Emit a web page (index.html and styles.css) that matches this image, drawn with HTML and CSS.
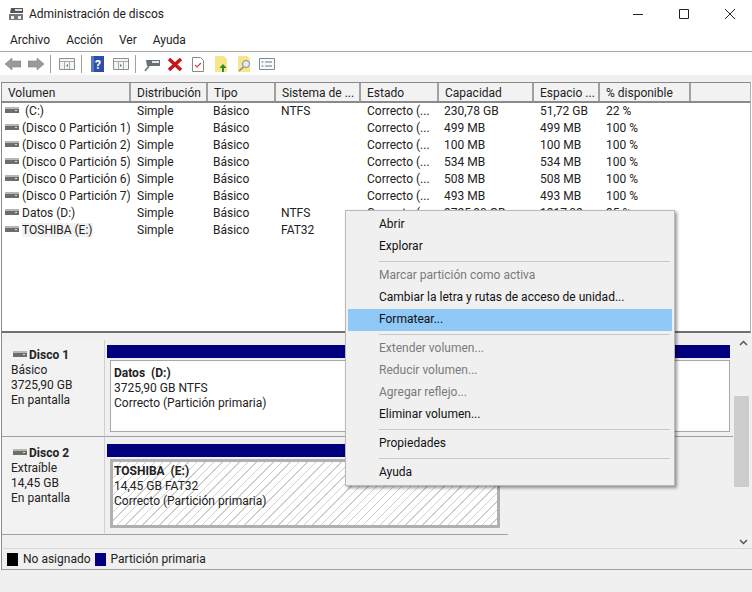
FILE: index.html
```html
<!DOCTYPE html>
<html lang="es">
<head>
    <meta charset="UTF-8">
    <title>Administración de discos</title>
    <link rel="stylesheet" href="styles.css">
</head>
<body>
<svg class="defs" width="0" height="0">
    <symbol id="disk" viewBox="0 0 14 6">
        <rect x="0" y="0" width="14" height="6" fill="#6b6f6b"/>
        <rect x="0" y="0" width="14" height="2" fill="#b4b8b4"/>
        <rect x="10" y="3" width="2" height="1" fill="#d8e8d0"/>
    </symbol>
</svg>
<div class="window">
    <div class="titlebar">
        <svg class="app-icon" width="16" height="16" viewBox="0 0 16 16">
            <path d="M3 2h12v5H2z" fill="#555"/>
            <rect x="7" y="3" width="7" height="2" fill="#ddd"/>
            <rect x="1" y="8" width="14" height="6" fill="#777"/>
            <rect x="3" y="10" width="3" height="3" fill="#eee"/>
            <rect x="10" y="10" width="3" height="3" fill="#eee"/>
        </svg>
        <span class="title">Administración de discos</span>
        <div class="controls">
            <svg width="12" height="12" viewBox="0 0 12 12"><path d="M1 6.500h10" stroke="#222" fill="none"/></svg>
            <svg width="12" height="12" viewBox="0 0 12 12"><path d="M1.500 1.500h9v9h-9z" stroke="#222" fill="none"/></svg>
            <svg width="12" height="12" viewBox="0 0 12 12"><path d="M1 1l10 10M11 1L1 11" stroke="#222" fill="none"/></svg>
        </div>
    </div>
    <div class="menubar">
        <span>Archivo</span>
        <span>Acción</span>
        <span>Ver</span>
        <span>Ayuda</span>
    </div>
    <div class="toolbar">
        <svg width="16" height="16" viewBox="0 0 16 16"><path d="M0 8l7-6v3h9v6H7v3z" fill="#9a9a9a" stroke="#777" stroke-width=".5"/></svg>
        <svg width="16" height="16" viewBox="0 0 16 16"><path d="M16 8L9 2v3H0v6h9v3z" fill="#9a9a9a" stroke="#777" stroke-width=".5"/></svg>
        <i class="sep"></i>
        <svg width="16" height="16" viewBox="0 0 16 16"><path d="M.5 2.500h15v11H.5z" fill="#f4f4f4" stroke="#8a8f94"/><path d="M1 5.500h14M5.500 6v7M10.500 6v7" stroke="#a5aaaf" fill="none"/><path d="M9 8v3L7 9.500z" fill="#4a8a5a"/></svg>
        <i class="sep"></i>
        <svg width="16" height="16" viewBox="0 0 16 16"><rect x="1" y="0" width="13" height="16" fill="#2c4fa8"/><rect x="1" y="0" width="3" height="16" fill="#5577c8"/><text x="8" y="12.500" class="help-mark">?</text></svg>
        <svg width="16" height="16" viewBox="0 0 16 16"><path d="M.5 2.500h15v11H.5z" fill="#f4f4f4" stroke="#8a8f94"/><path d="M1 5.500h14M5.500 6v7M10.500 6v7" stroke="#a5aaaf" fill="none"/><path d="M7 8v3l2-1.500z" fill="#4a8a5a"/></svg>
        <i class="sep"></i>
        <svg width="16" height="16" viewBox="0 0 16 16"><path d="M2 4h14v6H3z" fill="#6a7078"/><rect x="8" y="5" width="7" height="2" fill="#dfe6ee"/><path d="M5 10l-4 5" stroke="#7a8a7a" stroke-width="2"/></svg>
        <svg width="16" height="16" viewBox="0 0 16 16"><path d="M2 3l12 11M14 3L2 14" stroke="#c8141e" stroke-width="3.500" fill="none"/></svg>
        <svg width="16" height="16" viewBox="0 0 16 16"><path d="M2.500 1.500h8l3 3v11h-11z" fill="#fff" stroke="#8a8a8a"/><path d="M5 9l2 2 4-4" stroke="#d2483c" stroke-width="1.200" fill="none"/></svg>
        <svg width="16" height="16" viewBox="0 0 16 16"><path d="M2 0h9l3 3v13H2z" fill="#f7e58a"/><path d="M10 8l-3.500 4H9v4h2v-4h2.500z" fill="#2c8a2c"/></svg>
        <svg width="16" height="16" viewBox="0 0 16 16"><path d="M2 0h9l3 3v13H2z" fill="#f7e58a"/><circle cx="10" cy="8" r="3.500" fill="#e4eef6" stroke="#7a8a99"/><path d="M7.500 11L3 15" stroke="#7a8a99" stroke-width="1.500"/></svg>
        <svg width="16" height="16" viewBox="0 0 16 16"><path d="M.5 2.500h15v11H.5z" fill="#f8f8f8" stroke="#7f8a92"/><path d="M6 6h7M6 10h7M2.500 6h2M2.500 10h2" stroke="#6a7a88" fill="none"/></svg>
    </div>
    <div class="toolbar-gap"></div>

    <div class="volumes">
        <table>
            <colgroup>
                <col class="c-vol"><col class="c-dist"><col class="c-tipo"><col class="c-fs">
                <col class="c-estado"><col class="c-cap"><col class="c-libre"><col class="c-pct"><col>
            </colgroup>
            <thead>
                <tr>
                    <th>Volumen</th><th>Distribución</th><th>Tipo</th><th>Sistema de ...</th>
                    <th>Estado</th><th>Capacidad</th><th>Espacio ...</th><th>% disponible</th><th></th>
                </tr>
            </thead>
            <tbody>
                <tr><td><svg class="disk"><use href="#disk"/></svg>&nbsp;(C:)</td><td>Simple</td><td>Básico</td><td>NTFS</td><td>Correcto (...</td><td>230,78 GB</td><td>51,72 GB</td><td>22 %</td><td></td></tr>
                <tr><td><svg class="disk"><use href="#disk"/></svg>(Disco 0 Partición 1)</td><td>Simple</td><td>Básico</td><td></td><td>Correcto (...</td><td>499 MB</td><td>499 MB</td><td>100 %</td><td></td></tr>
                <tr><td><svg class="disk"><use href="#disk"/></svg>(Disco 0 Partición 2)</td><td>Simple</td><td>Básico</td><td></td><td>Correcto (...</td><td>100 MB</td><td>100 MB</td><td>100 %</td><td></td></tr>
                <tr><td><svg class="disk"><use href="#disk"/></svg>(Disco 0 Partición 5)</td><td>Simple</td><td>Básico</td><td></td><td>Correcto (...</td><td>534 MB</td><td>534 MB</td><td>100 %</td><td></td></tr>
                <tr><td><svg class="disk"><use href="#disk"/></svg>(Disco 0 Partición 6)</td><td>Simple</td><td>Básico</td><td></td><td>Correcto (...</td><td>508 MB</td><td>508 MB</td><td>100 %</td><td></td></tr>
                <tr><td><svg class="disk"><use href="#disk"/></svg>(Disco 0 Partición 7)</td><td>Simple</td><td>Básico</td><td></td><td>Correcto (...</td><td>493 MB</td><td>493 MB</td><td>100 %</td><td></td></tr>
                <tr><td><svg class="disk"><use href="#disk"/></svg>Datos (D:)</td><td>Simple</td><td>Básico</td><td>NTFS</td><td>Correcto (...</td><td>3725,90 GB</td><td>1317,02 ...</td><td>35 %</td><td></td></tr>
                <tr><td><svg class="disk"><use href="#disk"/></svg><span class="current">TOSHIBA (E:)</span></td><td>Simple</td><td>Básico</td><td>FAT32</td><td>Correcto (...</td><td>14,45 GB</td><td>14,45 GB</td><td>100 %</td><td></td></tr>
            </tbody>
        </table>
    </div>

    <div class="disks">
        <div class="disk-list">
            <div class="disk-row">
                <div class="disk-info">
                    <div class="disk-name"><svg class="disk"><use href="#disk"/></svg><b>Disco 1</b></div>
                    <div>Básico</div>
                    <div>3725,90 GB</div>
                    <div>En pantalla</div>
                </div>
                <div class="partition-wrap">
                    <div class="partition-bar"></div>
                    <div class="partition">
                        <b>Datos&nbsp; (D:)</b>
                        <div>3725,90 GB NTFS</div>
                        <div>Correcto (Partición primaria)</div>
                    </div>
                </div>
            </div>
            <div class="disk-row short">
                <div class="disk-info">
                    <div class="disk-name"><svg class="disk"><use href="#disk"/></svg><b>Disco 2</b></div>
                    <div>Extraíble</div>
                    <div>14,45 GB</div>
                    <div>En pantalla</div>
                </div>
                <div class="partition-wrap">
                    <div class="partition-bar"></div>
                    <div class="partition hatched">
                        <b>TOSHIBA&nbsp; (E:)</b>
                        <div>14,45 GB FAT32</div>
                        <div>Correcto (Partición primaria)</div>
                    </div>
                </div>
            </div>
        </div>
        <div class="scrollbar">
            <svg width="9" height="6" viewBox="0 0 9 6"><path d="M1 5l3.500-3.500L8 5" stroke="#555" stroke-width="1.500" fill="none"/></svg>
            <div class="track"><div class="thumb"></div></div>
            <svg width="9" height="6" viewBox="0 0 9 6"><path d="M1 1l3.500 3.500L8 1" stroke="#555" stroke-width="1.500" fill="none"/></svg>
        </div>
    </div>

    <div class="legend">
        <i class="swatch black"></i><span>No asignado</span>
        <i class="swatch navy"></i><span>Partición primaria</span>
    </div>
    <div class="statusbar"></div>

    <div class="context-menu">
        <div class="item">Abrir</div>
        <div class="item">Explorar</div>
        <hr>
        <div class="item off">Marcar partición como activa</div>
        <div class="item">Cambiar la letra y rutas de acceso de unidad...</div>
        <div class="item active">Formatear...</div>
        <hr>
        <div class="item off">Extender volumen...</div>
        <div class="item off">Reducir volumen...</div>
        <div class="item off">Agregar reflejo...</div>
        <div class="item">Eliminar volumen...</div>
        <hr>
        <div class="item">Propiedades</div>
        <hr>
        <div class="item">Ayuda</div>
    </div>
</div>
</body>
</html>
```

FILE: styles.css
```css
* {
    box-sizing: border-box;
}
body {
    margin: 0;
    font-family: Roboto, "Noto Sans", sans-serif;
    font-size: 12px;
    color: #222;
    background: #fff;
}
.defs {
    position: absolute;
}
.window {
    position: relative;
    width: 752px;
    height: 592px;
    overflow: hidden;
    display: flex;
    flex-direction: column;
}
.titlebar {
    height: 28px;
    flex: none;
    display: flex;
    align-items: center;
    padding-left: 8px;
    gap: 5px;
}
.controls {
    margin-left: auto;
    display: flex;
    gap: 34px;
    padding-right: 16px;
}
.menubar {
    height: 24px;
    flex: none;
    display: flex;
    align-items: center;
    gap: 16px;
    padding-left: 10px;
    border-bottom: 1px solid #a8a8a8;
}
.toolbar {
    height: 23px;
    flex: none;
    display: flex;
    align-items: center;
    gap: 7px;
    padding-left: 5px;
}
.sep {
    width: 1px;
    height: 18px;
    background: #a0a0a0;
    margin: 0 1px 0 -1px;
}
.help-mark {
    font-size: 12px;
    font-weight: bold;
    fill: #fff;
    text-anchor: middle;
}
.toolbar-gap {
    height: 7px;
    flex: none;
    background: #f0f0f0;
}
.volumes {
    height: 251px;
    flex: none;
    margin: 0 1px;
    border-left: 1px solid #8a8a8a;
    border-right: 1px solid #b0b0b0;
    border-top: 1px solid #8a8a8a;
    border-bottom: 2px solid #707070;
}
table {
    border-collapse: collapse;
    table-layout: fixed;
    width: 100%;
}
.c-vol { width: 128px; }
.c-dist { width: 77px; }
.c-tipo { width: 68px; }
.c-fs { width: 85px; }
.c-estado { width: 78px; }
.c-cap { width: 95px; }
.c-libre { width: 66px; }
.c-pct { width: 91px; }
th {
    height: 19px;
    padding: 1px 0 0 6px;
    text-align: left;
    font-weight: normal;
    background: #f2f2f2;
    border-right: 2px solid #a0a0a0;
    border-bottom: 2px solid #8a8a8a;
    white-space: nowrap;
    overflow: hidden;
}
th:last-child {
    border-right: none;
}
td {
    height: 17px;
    padding: 0 0 0 6px;
    white-space: nowrap;
    overflow: hidden;
}
td:first-child {
    padding-left: 3px;
}
td:nth-child(2), td:nth-child(5), td:nth-child(7), td:nth-child(8) {
    padding-left: 7px;
}
.disk {
    width: 14px;
    height: 6px;
    margin-right: 3px;
    vertical-align: 2px;
}
.current {
    background: #f2f2f2;
}
.disks {
    height: 215px;
    flex: none;
    display: flex;
    margin-left: 1px;
    border-left: 1px solid #8a8a8a;
    background: #f0f0f0;
}
.disk-list {
    flex: 1;
    padding-top: 7px;
}
.disk-row {
    height: 97px;
    display: flex;
    width: 731px;
}
.disk-row.short {
    width: 506px;
    height: 98px;
}
.disk-info {
    width: 103px;
    flex: none;
    padding: 8px 0 0 9px;
    line-height: 15px;
    border-right: 1px solid #d0d0d0;
    border-bottom: 1px solid #a0a0a0;
    background: #f2f2f2;
}
.short .disk-info {
    padding-top: 9px;
}
.disk-name .disk {
    margin-left: 2px;
    margin-right: 2px;
}
.partition-wrap {
    flex: 1;
    padding: 5px 2px 3px 2px;
    border-bottom: 1px solid #a0a0a0;
}
.short .partition-wrap {
    padding-top: 7px;
}
.partition-bar {
    height: 13px;
    margin-right: 1px;
    background: #00007f;
}
.partition {
    height: 72px;
    margin: 2px 1px 0 3px;
    padding: 5px 0 0 3px;
    line-height: 15px;
    background: #fff;
    border: 1px solid #a8a8a8;
}
.hatched {
    height: 69px;
    margin-right: 6px;
    border: 3px solid #b0b0b0;
    padding: 2px 0 0 1px;
    background: repeating-linear-gradient(135deg, #fff, #fff 5px, #cfcfcf 5px, #cfcfcf 6px);
}
.scrollbar {
    width: 18px;
    flex: none;
    display: flex;
    flex-direction: column;
    align-items: center;
    padding: 7px 0 3px;
    background: #f0f0f0;
}
.track {
    flex: 1;
    width: 100%;
    padding: 50px 3px 0 0;
}
.thumb {
    height: 91px;
    background: #cdcdcd;
}
.legend {
    height: 22px;
    flex: none;
    display: flex;
    align-items: center;
    margin-left: 1px;
    padding-left: 5px;
    border-left: 1px solid #8a8a8a;
    border-top: 1px solid #d8d8d8;
    border-bottom: 1px solid #a0a0a0;
    background: #f0f0f0;
}
.swatch {
    width: 11px;
    height: 13px;
    margin-right: 5px;
}
.swatch.black {
    background: #000;
}
.swatch.navy {
    background: #00007f;
    margin-left: 4px;
}
.statusbar {
    flex: 1;
    background: #f0f0f0;
}
.context-menu {
    position: absolute;
    left: 345px;
    top: 210px;
    width: 330px;
    height: 276px;
    padding: 3px 2px;
    background: #f0f0f0;
    border: 1px solid #b8b8b8;
    box-shadow: 2px 2px 3px rgba(0,0,0,0.4);
}
.item {
    height: 22px;
    line-height: 20px;
    padding-left: 31px;
    color: #111;
}
.item.off {
    color: #7a7a7a;
}
.item.active {
    background: #90c8f6;
}
.context-menu hr {
    height: 1px;
    margin: 3px 2px 3px 31px;
    border: none;
    background: #c8c8c8;
}
```
